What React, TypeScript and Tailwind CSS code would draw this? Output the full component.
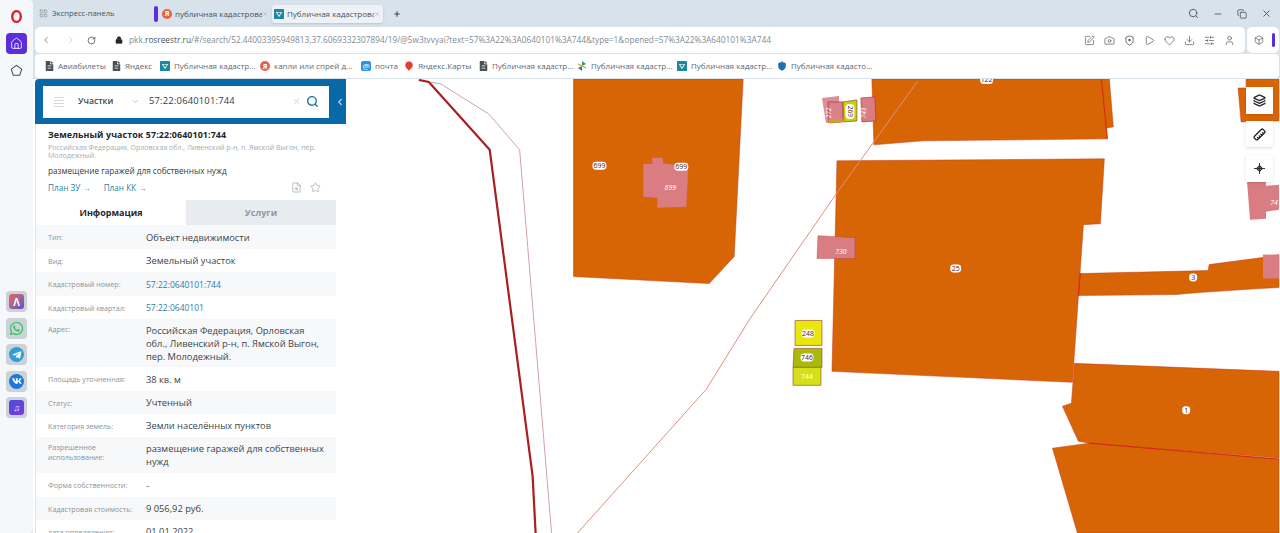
import {
  Box,
  Camera,
  ChevronDown,
  ChevronLeft,
  ChevronRight,
  Copy,
  Download,
  FileSearch,
  Heart,
  Home,
  Layers,
  LayoutGrid,
  Lock,
  MapPin,
  Minus,
  Play,
  Plus,
  RotateCw,
  Ruler,
  Search,
  Shield,
  SlidersHorizontal,
  SquarePen,
  Star,
  User,
  X,
} from "lucide-react";
import { FaFileAlt, FaTelegramPlane, FaVk, FaWhatsapp } from "react-icons/fa";

const sans = "[font-family:'Open_Sans',sans-serif]";

const rows = [
  { label: "Тип:", value: "Объект недвижимости", h: "h-[24px]", gray: true },
  { label: "Вид:", value: "Земельный участок", h: "h-[23px]" },
  { label: "Кадастровый номер:", value: "57:22:0640101:744", h: "h-[24px]", gray: true, link: true },
  { label: "Кадастровый квартал:", value: "57:22:0640101", h: "h-[23px]", link: true },
  { label: "Адрес:", value: "Российская Федерация, Орловская обл., Ливенский р-н, п. Ямской Выгон, пер. Молодежный.", h: "h-[48px]", gray: true },
  { label: "Площадь уточненная:", value: "38 кв. м", h: "h-[24px]" },
  { label: "Статус:", value: "Учтенный", h: "h-[23px]", gray: true },
  { label: "Категория земель:", value: "Земли населённых пунктов", h: "h-[23px]" },
  { label: "Разрешенное использование:", value: "размещение гаражей для собственных нужд", h: "h-[36px]", gray: true },
  { label: "Форма собственности:", value: "-", h: "h-[24px]" },
  { label: "Кадастровая стоимость:", value: "9 056,92 руб.", h: "h-[23px]", gray: true },
  { label: "дата определения:", value: "01.01.2022", h: "h-[23px]" },
];

function RosreestrIcon({ className }: { className?: string }) {
  return (
    <svg viewBox="0 0 12 12" className={className}>
      <rect width="12" height="12" rx="1" fill="#1b86a8" />
      <path d="M2 3.5h8L6 10z" fill="#d8f0d8" />
      <path d="M4 4.5h4L6 7.5z" fill="#1b6fb0" />
    </svg>
  );
}

function YandexIcon({ className }: { className?: string }) {
  return (
    <span className={`flex items-center justify-center rounded-full bg-[#e8604c] text-[7px] font-bold leading-none text-white ${className}`}>
      Я
    </span>
  );
}

function FileIcon() {
  return <FaFileAlt className="h-[10px] w-[9px] shrink-0 text-[#4a4f55]" />;
}

function Bookmark({ icon, text, className }: { icon: React.ReactNode; text: string; className: string }) {
  return (
    <div className={`flex shrink-0 items-center ${className}`}>
      <span className="flex w-[10px] shrink-0 justify-center">{icon}</span>
      <span className="ml-[4px] whitespace-nowrap text-[8px] text-[#5d6a74]">{text}</span>
    </div>
  );
}

function AppTile({ children }: { children: React.ReactNode }) {
  return (
    <div className="flex h-[21px] w-[21px] items-center justify-center rounded-[4px] bg-[#cdd2d7]">{children}</div>
  );
}

function ParcelMap() {
  const orange = "#d76506";
  const edge = "#c9361a";
  const pink = "#d97d83";
  const labels: [number, number, string, number][] = [
    [599, 165, "699", 14],
    [681, 166, "699", 14],
    [956, 268, "25", 11],
    [1194, 277, "3", 8],
    [1187, 410, "1", 8],
    [808, 333, "248", 13],
    [807, 357, "746", 13],
    [987, 79, "122", 13],
  ];
  return (
    <svg viewBox="346 78 934 455" className={`absolute inset-0 h-full w-full ${sans}`}>
      <g stroke={edge} strokeWidth="0.5" strokeLinejoin="round">
        <polygon points="573,78 743,78 734,256 709,283 573,276" fill={orange} />
        <polygon points="872,78 1110,78 1114,126 1107,127 1108,138 923,140 874,144" fill={orange} />
        <polygon points="837,160 1105,158 1101,223 1084,224 1073,382 832,371" fill={orange} />
        <polygon points="1080,273 1209,270 1210,264 1263,257 1280,254 1280,287 1260,288 1200,292 1177,294 1079,295" fill={orange} />
        <polygon points="1075,363 1280,371 1280,458 1090,443 1079,441 1063,406 1072,403" fill={orange} />
        <polygon points="1053,448 1090,443 1280,459 1280,533 1078,533" fill={orange} />
        <polygon points="1247,78 1280,78 1280,120 1242,121 1239,87 1247,87" fill={orange} />
      </g>
      {/* brighter shared boundaries */}
      <g fill="none" stroke="#d81e10" strokeWidth="0.9">
        <polyline points="1090,443 1280,459" />
        <polyline points="1081,273 1079,295" />
        <polyline points="1102,78 1108,138" />
      </g>
      <polygon points="643,163 652,163 652,157 662,157 663,163 688,165 686,206 657,207 657,197 643,196" fill={pink} />
      <polygon points="1248,181 1267,181 1267,185 1280,184 1280,209 1267,211 1267,218 1251,219" fill={pink} />
      <rect x="1264" y="254" width="16" height="24" fill={pink} />
      <polygon points="818,235 855,237 855,258 817,258" fill={pink} stroke="#b83a44" strokeWidth="0.4" />
      <polygon points="822,97 839,95 840,120 826,122" fill="#dc8f96" />
      <polygon points="828,101 843,101 843,121 829,122" fill="#d9828a" stroke="#b03030" strokeWidth="0.7" />
      <polygon points="829,118 843,118 843,121 829,122" fill="#c9a522" />
      <polygon points="843,101 857,99 857,120 844,121" fill="#c5d20a" stroke="#8a4a20" strokeWidth="0.7" />
      <polygon points="861,97 875,96 876,120 862,121" fill={pink} stroke="#c0303c" strokeWidth="0.7" />
      <polygon points="795,320 822,320 822,345 795,345" fill="#e9e70d" stroke="#a0552a" strokeWidth="0.7" />
      <polygon points="794,348 822,348 822,367 793,367" fill="#a9bb0a" stroke="#a0552a" strokeWidth="0.7" />
      <polygon points="793,367 821,367 821,385 793,385" fill="#d6e01a" stroke="#a0552a" strokeWidth="0.7" />

      <polyline points="418,79 428,81 489,149 532,476 535,533" fill="none" stroke="#a81f1f" strokeWidth="2.2" />
      <polyline points="430,81 440,83 488,113 519,149 551,533" fill="none" stroke="#d2a3a3" strokeWidth="1" />
      <polyline points="918,80 835,195 750,318 706,389 577,533" fill="none" stroke="#dd8f7e" strokeWidth="1" />

      {labels.map(([x, y, text, w]) => (
        <g key={`${x}-${y}`}>
          <rect x={x - w / 2} y={y - 4} width={w} height="8" rx="3.5" fill="#ffffff" />
          <text x={x} y={y + 2.5} textAnchor="middle" fontSize="7" fill="#4a2020">
            {text}
          </text>
        </g>
      ))}
      <text x={670} y={189.5} textAnchor="middle" fontSize="7" fontStyle="italic" fill="#ffffff">699</text>
      <text x={841} y={253.5} textAnchor="middle" fontSize="7" fontStyle="italic" fill="#ffffff">730</text>
      <text x={807} y={378.5} textAnchor="middle" fontSize="7" fill="#ffffff">744</text>
      <text x={1275} y={204} textAnchor="middle" fontSize="7" fontStyle="italic" fill="#ffffff">74</text>
      <rect x="845.5" y="103" width="9" height="15" rx="4" fill="#ffffff" />
      <text x={850} y={110.5} textAnchor="middle" fontSize="6.5" fill="#4a2020" transform="rotate(90 850 110.5)" dominantBaseline="middle">269</text>
      <text x={829} y={112} textAnchor="middle" fontSize="6.5" fontStyle="italic" fill="#ffffff" transform="rotate(-90 829 112)" dominantBaseline="middle">272</text>
      <text x={864} y={112} textAnchor="middle" fontSize="6.5" fontStyle="italic" fill="#ffffff" transform="rotate(-90 864 112)" dominantBaseline="middle">743</text>
    </svg>
  );
}

export default function App() {
  return (
    <div className={`flex h-[533px] w-[1280px] overflow-hidden bg-[#d8e2ea] ${sans}`}>
      {/* opera sidebar */}
      <aside className="flex h-full w-[33px] shrink-0 flex-col items-center rounded-r-[4px] bg-[#f5f8fa] pt-[10px]">
        <svg viewBox="0 0 14 14" className="h-[13px] w-[13px]">
          <ellipse cx="7" cy="7" rx="4.6" ry="5.8" fill="none" stroke="#d9222c" strokeWidth="2.6" />
        </svg>
        <div className="mt-[10px] flex h-[21px] w-[21px] items-center justify-center rounded-[4px] bg-[#5a2fd9]">
          <Home className="h-[13px] w-[13px] text-white" strokeWidth={1.5} />
        </div>
        <svg viewBox="0 0 14 14" className="mt-[10px] h-[13px] w-[13px]">
          <path d="M7 1.5 12.6 5.6 10.5 12.2H3.5L1.4 5.6Z" fill="none" stroke="#3e4a52" strokeWidth="1.1" />
        </svg>
        <div className="mt-[214px] flex flex-col gap-[5.5px]">
          <AppTile>
            <div className="flex h-[15px] w-[15px] items-center justify-center rounded-[3px] bg-gradient-to-br from-[#e8644a] to-[#5a4ad0] text-[10px] font-bold leading-none text-white">
              Λ
            </div>
          </AppTile>
          <AppTile>
            <FaWhatsapp className="h-[15px] w-[15px] text-[#25c45f]" />
          </AppTile>
          <AppTile>
            <div className="flex h-[15px] w-[15px] items-center justify-center rounded-full bg-[#2f9fd8]">
              <FaTelegramPlane className="h-[10px] w-[10px] text-white" />
            </div>
          </AppTile>
          <AppTile>
            <div className="flex h-[15px] w-[15px] items-center justify-center rounded-full bg-[#1b78dc]">
              <FaVk className="h-[10px] w-[10px] text-white" />
            </div>
          </AppTile>
          <AppTile>
            <div className="flex h-[15px] w-[15px] items-center justify-center rounded-[3px] bg-gradient-to-br from-[#4a4ae0] to-[#7a3ad8] text-[9px] leading-none text-white">
              ♫
            </div>
          </AppTile>
        </div>
      </aside>

      <div className="flex min-w-0 flex-1 flex-col">
        {/* tab strip */}
        <div className="flex h-[27px] shrink-0 items-center text-[8px] text-[#45525c]">
          <LayoutGrid className="ml-[6px] h-[9px] w-[9px] text-[#7b8790]" strokeWidth={1.5} />
          <span className="ml-[4px] w-[102px] whitespace-nowrap text-[7.6px]">Экспресс-панель</span>
          <div className="h-[16px] w-[4px] rounded-[2px] bg-[#5a2fd9]" />
          <YandexIcon className="ml-[4px] h-[10px] w-[10px] shrink-0" />
          <span className="ml-[3px] w-[87px] overflow-hidden whitespace-nowrap">публичная кадастровая</span>
          <X className="h-[6px] w-[6px] text-[#a0aab2]" />
          <div className="ml-[4px] flex h-[18px] w-[111px] items-center rounded-[3px] bg-[#eef2f6] pl-[2px] shadow-sm">
            <RosreestrIcon className="h-[10px] w-[10px] shrink-0" />
            <span className="ml-[3px] w-[87px] overflow-hidden whitespace-nowrap">Публичная кадастровая</span>
            <X className="h-[6px] w-[6px] text-[#a0aab2]" />
          </div>
          <Plus className="ml-[10px] h-[8px] w-[8px] text-[#22282e]" strokeWidth={2.5} />
          <div className="ml-auto flex items-center gap-[14px] pr-[8px] text-[#4a555e]">
            <Search className="h-[11px] w-[11px]" />
            <Minus className="h-[10px] w-[10px]" />
            <Copy className="h-[10px] w-[10px]" />
            <X className="h-[11px] w-[11px]" />
          </div>
        </div>

        {/* address bar */}
        <div className="flex h-[26px] shrink-0 gap-[2px] pr-[1px]">
          <div className="ml-[2px] flex min-w-0 flex-1 items-center rounded-[5px] bg-white">
            <ChevronLeft className="ml-[6px] h-[10px] w-[10px] text-[#6b7780]" />
            <ChevronRight className="ml-[15px] h-[10px] w-[10px] text-[#c3cbd1]" />
            <RotateCw className="ml-[11px] h-[9px] w-[9px] text-[#3e4a52]" />
            <Lock className="ml-[19px] h-[8px] w-[8px] fill-[#22282e] text-[#22282e]" />
            <div className="ml-[6px] min-w-0 flex-1 overflow-hidden whitespace-nowrap text-[8.3px] text-[#808b94]">
              pkk.<span className="font-medium text-[#4a555e]">rosreestr.ru</span>
              /#/search/52.44003395949813,37.6069332307894/19/@5w3tvvyai?text=57%3A22%3A0640101%3A744&type=1&opened=57%3A22%3A640101%3A744
            </div>
            <div className="flex items-center gap-[9px] pr-[10px] text-[#4a555e]">
              <SquarePen className="h-[11px] w-[11px]" strokeWidth={1.5} />
              <Camera className="h-[11px] w-[11px]" strokeWidth={1.5} />
              <svg viewBox="0 0 12 12" className="h-[11px] w-[11px]">
                <path d="M6 1 10 2.5V6c0 2.5-2 4-4 5-2-1-4-2.5-4-5V2.5Z" fill="none" stroke="currentColor" strokeWidth="0.9" />
                <circle cx="6" cy="5.5" r="1.3" fill="currentColor" />
              </svg>
              <Play className="h-[11px] w-[11px]" strokeWidth={1.5} />
              <Heart className="h-[11px] w-[11px]" strokeWidth={1.5} />
              <Download className="h-[11px] w-[11px]" strokeWidth={1.5} />
              <SlidersHorizontal className="h-[11px] w-[11px]" strokeWidth={1.5} />
              <User className="h-[11px] w-[11px]" strokeWidth={1.5} />
            </div>
          </div>
          <div className="flex w-[32px] items-center justify-end gap-[8px] rounded-[5px] bg-white pr-[4px]">
            <Box className="h-[10px] w-[10px] text-[#3e4a52]" strokeWidth={1.5} />
            <div className="h-[14px] w-[3px] rounded-[2px] bg-[#5a2fd9]" />
          </div>
        </div>

        {/* bookmarks bar */}
        <div className="ml-[2px] mr-[1px] mt-[1px] flex h-[24px] shrink-0 items-center rounded-[4px] bg-white pl-[9px]">
          <Bookmark icon={<FileIcon />} text="Авиабилеты" className="w-[67px]" />
          <Bookmark icon={<FileIcon />} text="Яндекс" className="w-[49px]" />
          <Bookmark icon={<RosreestrIcon className="h-[10px] w-[10px]" />} text="Публичная кадастр..." className="w-[100px]" />
          <Bookmark icon={<YandexIcon className="h-[10px] w-[10px]" />} text="капли или спрей д..." className="w-[101px]" />
          <Bookmark icon={<span className="flex h-[10px] w-[10px] items-center justify-center rounded-[2px] bg-[#2f8fe0] text-[8px] leading-none text-white">@</span>} text="почта" className="w-[43px]" />
          <Bookmark icon={<MapPin className="h-[10px] w-[10px] fill-[#e0402c] text-[#e0402c]" />} text="Яндекс.Карты" className="w-[74px]" />
          <Bookmark icon={<FileIcon />} text="Публичная кадастр..." className="w-[99px]" />
          <Bookmark icon={<svg viewBox="0 0 10 10" className="h-[10px] w-[10px]"><path d="M5 0 9 3 5 5Z" fill="#2f9f6a" /><path d="M1 7 5 5 5 10Z" fill="#2f6fd0" /><path d="M1 3 5 5 9 7 5 5Z" stroke="#e0a030" /></svg>} text="Публичная кадастр..." className="w-[100px]" />
          <Bookmark icon={<RosreestrIcon className="h-[10px] w-[10px]" />} text="Публичная кадастр..." className="w-[100px]" />
          <Bookmark icon={<Shield className="h-[10px] w-[10px] fill-[#1f6fb0] text-[#1f6fb0]" />} text="Публичная кадасто..." className="w-[100px]" />
        </div>

        {/* page */}
        <div className="mt-[1px] flex min-h-0 flex-1 bg-white">
          {/* info panel */}
          <div className="ml-[2px] flex w-[311px] shrink-0 flex-col">
            <div className="flex h-[45px] shrink-0 items-center rounded-tl-[4px] bg-[#0868a8] pl-[8px] text-[#3e4a52]">
              <div className="flex h-[32px] w-[286px] items-center bg-white">
                <div className="ml-[11px] flex w-[10px] flex-col gap-[2px]">
                  <span className="h-px bg-[#d5dadf]" />
                  <span className="h-px bg-[#d5dadf]" />
                  <span className="h-px bg-[#d5dadf]" />
                  <span className="h-px bg-[#d5dadf]" />
                </div>
                <span className="ml-[14px] w-[53px] text-[8.6px] font-semibold">Участки</span>
                <ChevronDown className="h-[9px] w-[9px] text-[#aab3ba]" />
                <span className="ml-[9px] w-[143px] whitespace-nowrap text-[9.4px] font-medium tracking-[0.2px] text-[#333c44]">57:22:0640101:744</span>
                <X className="h-[9px] w-[9px] text-[#c3cbd1]" />
                <Search className="ml-[5px] h-[13px] w-[13px] text-[#1070b0]" strokeWidth={2.5} />
              </div>
              <ChevronLeft className="ml-[6px] h-[10px] w-[10px] text-[#b5d5ea]" strokeWidth={3} />
            </div>
            <div className="flex w-[301px] min-h-0 flex-1 flex-col overflow-hidden border-l border-[#dbe4ec] bg-white">
              <div className="h-[76px] shrink-0 pl-[12px] pr-[15px] pt-[4px]">
                <div className="text-[8.9px] font-bold leading-[13px] tracking-[0.1px] text-[#20262c]">Земельный участок 57:22:0640101:744</div>
                <div className="mt-[3px] text-[7px] leading-[8px] text-[#a5aeb6]">
                  Российская Федерация, Орловская обл., Ливенский р-н, п. Ямской Выгон, пер. Молодежный.
                </div>
                <div className="mt-[4px] text-[8.2px] leading-[13px] text-[#333c44]">размещение гаражей для собственных нужд</div>
                <div className="mt-[2px] flex items-center text-[8.2px] leading-[17px] text-[#2b7fa8]">
                  <span>План ЗУ →</span>
                  <span className="ml-[13px]">План КК →</span>
                  <FileSearch className="ml-auto h-[11px] w-[11px] text-[#9aa4ac]" strokeWidth={1.5} />
                  <Star className="ml-[8px] h-[11px] w-[11px] text-[#9aa4ac]" strokeWidth={1.5} />
                </div>
              </div>
              <div className="flex h-[25px] shrink-0 items-center text-[9px] font-bold">
                <div className="flex h-full w-[150px] items-center justify-center text-[#22282e]">Информация</div>
                <div className="flex h-full flex-1 items-center justify-center bg-[#e8ecf1] text-[#8e98a1]">Услуги</div>
              </div>
              {rows.map((row) => (
                <div
                  key={row.label}
                  className={`flex shrink-0 pl-[12px] ${row.h} ${row.gray ? "bg-[#f6f8fa]" : "bg-white"} ${row.label === "Адрес:" || row.label === "Разрешенное использование:" ? "items-start pt-[5px]" : "items-center"}`}
                >
                  <div className="w-[98px] shrink-0 pr-[8px] text-[7.2px] leading-[10px] text-[#8a949d]">{row.label}</div>
                  <div className={`pr-[8px] leading-[13px] ${row.link ? "text-[8.5px] text-[#2b7fa8]" : "text-[9.3px] text-[#3b444c]"}`}>{row.value}</div>
                </div>
              ))}
            </div>
          </div>

          {/* map canvas */}
          <div className="relative min-w-0 flex-1 overflow-hidden">
            <ParcelMap />
            <div className="absolute left-[900px] top-[8px] flex h-[27px] w-[27px] items-center justify-center bg-white shadow">
              <Layers className="h-[13px] w-[13px] text-[#22282e]" strokeWidth={2.5} />
            </div>
            <div className="absolute left-[900px] top-[42px] flex h-[26px] w-[27px] items-center justify-center bg-white shadow">
              <Ruler className="h-[13px] w-[13px] rotate-90 text-[#22282e]" strokeWidth={2.5} />
            </div>
            <div className="absolute left-[900px] top-[76px] flex h-[27px] w-[27px] items-center justify-center bg-white shadow">
              <svg viewBox="0 0 12 12" className="h-[11px] w-[11px]">
                <path d="M6 0v12M0 6h12" stroke="#22282e" strokeWidth="1" />
                <path d="M6 3 9 6 6 9 3 6Z" fill="none" stroke="#22282e" strokeWidth="1.3" />
              </svg>
            </div>
          </div>
        </div>
      </div>
    </div>
  );
}
